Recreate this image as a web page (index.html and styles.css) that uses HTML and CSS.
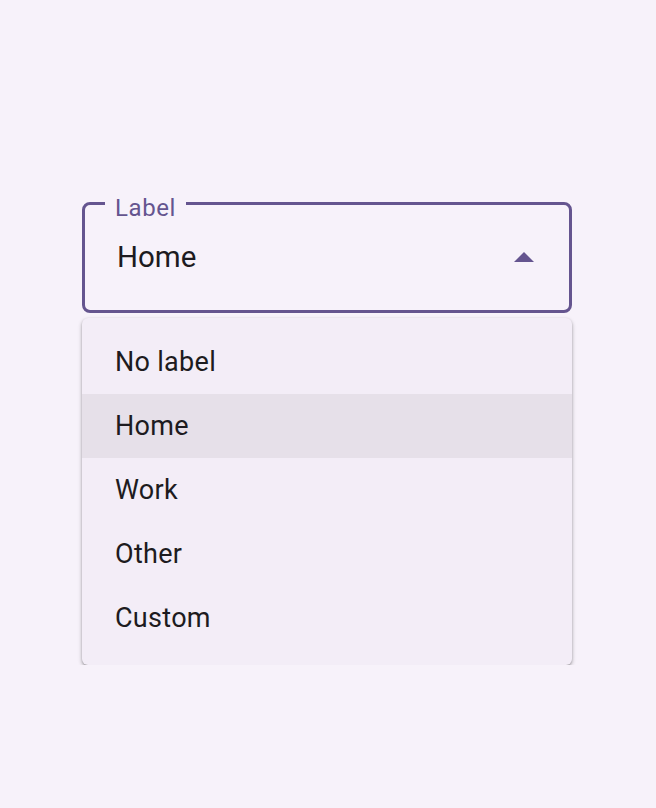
FILE: index.html
```html
<!DOCTYPE html>
<html>
<head>
<meta charset="utf-8">
<link rel="stylesheet" href="styles.css">
</head>
<body>
<div class="page">
  <div class="dropdown">
    <div class="field">
      <span class="label">Label</span>
      <span class="value">Home</span>
      <svg class="arrow" width="20" height="10" viewBox="0 0 20 10"><path d="M0 10 L10 0 L20 10 Z" fill="#65558F"/></svg>
    </div>
    <ul class="menu">
      <li class="item">No label</li>
      <li class="item selected">Home</li>
      <li class="item">Work</li>
      <li class="item">Other</li>
      <li class="item">Custom</li>
    </ul>
  </div>
</div>
</body>
</html>
```
FILE: styles.css
```css
html, body {
  margin: 0;
  padding: 0;
  background: #F7F2FA;
}
body {
  font-family: Roboto, "Noto Sans", sans-serif;
  color: #1D1B20;
}
.page {
  padding-top: 202px;
  padding-left: 82px;
}
.dropdown {
  width: 490px;
}
.field {
  position: relative;
  box-sizing: border-box;
  height: 111px;
  border: 3px solid #65558F;
  border-radius: 8px;
  display: flex;
  align-items: center;
  padding: 0 35px 0 32px;
}
.label {
  position: absolute;
  top: -9px;
  left: 20px;
  padding: 0 10px 0 10px;
  background: #F7F2FA;
  color: #65558F;
  font-size: 24px;
  line-height: 24px;
  letter-spacing: 0.6px;
}
.value {
  flex: 1;
  font-size: 29.5px;
  line-height: 36px;
  margin-top: -2px;
}
.arrow {
  display: block;
  margin-top: -2px;
}
.menu {
  list-style: none;
  margin: 5px 0 0 0;
  padding: 12px 0 15px 0;
  background: #F3EDF7;
  border-radius: 6px;
  box-shadow: 0 2px 4px rgba(0,0,0,0.28), 0 1px 2px rgba(0,0,0,0.18);
}
.item {
  height: 64px;
  display: flex;
  align-items: center;
  padding-left: 33px;
  font-size: 27px;
  letter-spacing: 0.3px;
}
.item.selected {
  background: #E6E0E9;
}
```
